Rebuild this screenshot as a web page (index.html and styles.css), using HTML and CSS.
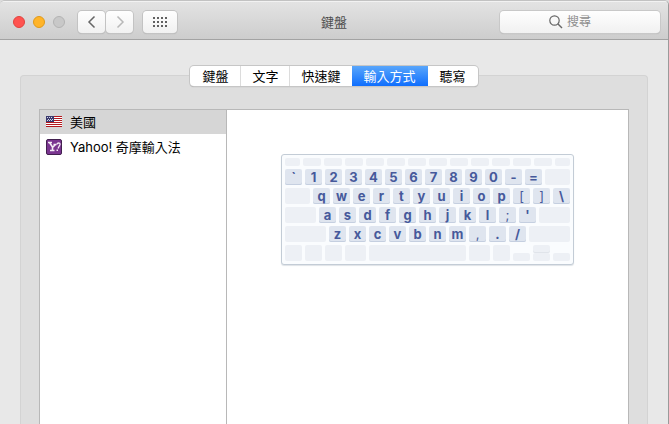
FILE: index.html
```html
<!DOCTYPE html>
<html lang="zh-Hant">
<head>
<meta charset="utf-8">
<title>鍵盤</title>
<link rel="stylesheet" href="styles.css">
</head>
<body>
<div class="window">
  <header class="titlebar">
    <div class="tools">
      <div class="lights">
        <button class="light close" aria-label="關閉"></button>
        <button class="light minimize" aria-label="縮到最小"></button>
        <button class="light disabled" aria-label="縮放" disabled></button>
      </div>
      <div class="history">
        <button class="tool" aria-label="上一頁"><svg width="10" height="14" viewBox="0 0 10 14"><path d="M7.500 1.500 2 7l5.500 5.500" fill="none" stroke="#666" stroke-width="1.500"/></svg></button>
        <button class="tool" aria-label="下一頁" disabled><svg width="10" height="14" viewBox="0 0 10 14"><path d="M2.500 1.500 8 7l-5.500 5.500" fill="none" stroke="#b8b8b8" stroke-width="1.500"/></svg></button>
      </div>
      <button class="tool all" aria-label="顯示全部"><svg width="14" height="10" viewBox="0 0 14 10"><path d="M0 1h14M0 5h14M0 9h14" fill="none" stroke="#606060" stroke-width="2" stroke-dasharray="2 2"/></svg></button>
    </div>
    <h1 class="title">鍵盤</h1>
    <label class="search">
      <svg width="14" height="14" viewBox="0 0 14 14"><circle cx="5.500" cy="5.500" r="4.700" fill="none" stroke="#666" stroke-width="1.200"/><path d="m9 9 4 4" stroke="#666" stroke-width="1.400"/></svg>
      <input type="search" placeholder="搜尋" aria-label="搜尋">
    </label>
  </header>
  <nav class="tabs">
    <button class="tab">鍵盤</button>
    <button class="tab">文字</button>
    <button class="tab">快速鍵</button>
    <button class="tab active">輸入方式</button>
    <button class="tab">聽寫</button>
  </nav>
  <main class="panel">
    <div class="split">
      <ul class="sources">
        <li class="source selected">
          <svg width="16" height="16" viewBox="0 0 16 16" shape-rendering="crispEdges"><path fill="#fff" d="M0 2h16v11H0z"/><path fill="#b3191f" d="M0 2h16v1H0zM0 4h16v1H0zM0 6h16v1H0zM0 8h16v1H0zM0 10h16v1H0zM0 12h16v1H0z"/><path fill="#3a3a6e" d="M0 2h8v6H0z"/><path fill="#d4d4e6" d="M1 3h1v1H1zM3 3h1v1H3zM5 3h1v1H5zM2 5h1v1H2zM4 5h1v1H4zM6 5h1v1H6zM1 6h1v1H1zM3 6h1v1H3zM5 6h1v1H5z"/></svg>
          <span>美國</span>
        </li>
        <li class="source">
          <svg width="16" height="16" viewBox="0 0 16 16"><rect x=".5" y=".5" width="15" height="15" rx="1.500" fill="#7a3590" stroke="#42204f"/><path d="M2 3.500h4M7.500 5.500h3M4 11.500h4.500M3.500 3.500l3 4.500v3M9.500 5.500 6.500 8.500" fill="none" stroke="#f4ecf5" stroke-width="1.600"/><path d="M11 5.500c0-2 3.500-2 3 0l-2 4" fill="none" stroke="#f4ecf5" stroke-width="1.300"/><path d="M10.500 10.500H12V12h-1.500z" fill="#f4ecf5"/></svg>
          <span>Yahoo! 奇摩輸入法</span>
        </li>
      </ul>
      <section class="preview">
        <div class="keyboard">
          <div class="row function"><i class="key edge"></i><i class="key"></i><i class="key"></i><i class="key"></i><i class="key"></i><i class="key"></i><i class="key"></i><i class="key"></i><i class="key"></i><i class="key"></i><i class="key"></i><i class="key"></i><i class="key"></i><i class="key edge"></i></div>
          <div class="row"><b class="key">`</b><b class="key">1</b><b class="key">2</b><b class="key">3</b><b class="key">4</b><b class="key">5</b><b class="key">6</b><b class="key">7</b><b class="key">8</b><b class="key">9</b><b class="key">0</b><b class="key">-</b><b class="key">=</b><i class="key fill"></i></div>
          <div class="row"><i class="key fill"></i><b class="key">q</b><b class="key">w</b><b class="key">e</b><b class="key">r</b><b class="key">t</b><b class="key">y</b><b class="key">u</b><b class="key">i</b><b class="key">o</b><b class="key">p</b><b class="key light-text">[</b><b class="key light-text">]</b><b class="key">\</b></div>
          <div class="row"><i class="key caps"></i><b class="key">a</b><b class="key">s</b><b class="key">d</b><b class="key">f</b><b class="key">g</b><b class="key">h</b><b class="key">j</b><b class="key">k</b><b class="key">l</b><b class="key light-text">;</b><b class="key">'</b><i class="key fill"></i></div>
          <div class="row"><i class="key fill"></i><b class="key">z</b><b class="key">x</b><b class="key">c</b><b class="key">v</b><b class="key">b</b><b class="key">n</b><b class="key">m</b><b class="key light-text">,</b><b class="key">.</b><b class="key">/</b><i class="key fill"></i></div>
          <div class="row"><i class="key"></i><i class="key"></i><i class="key"></i><i class="key command"></i><i class="key fill"></i><i class="key command"></i><i class="key"></i><i class="key half"></i><span class="stack"><i class="key half"></i><i class="key half"></i></span><i class="key half"></i></div>
        </div>
      </section>
    </div>
  </main>
</div>
</body>
</html>
```
FILE: styles.css
```css
* {
  box-sizing: border-box;
}

body {
  margin: 0;
  background: #dcdcdc;
  color: #000;
  font: 13px/16px Inter, "Noto Sans CJK TC", sans-serif;
}

button,
input {
  margin: 0;
  padding: 0;
  border: 0;
  color: inherit;
  font: inherit;
}

svg {
  display: block;
  flex: none;
}

.window {
  display: flex;
  flex-direction: column;
  height: 100vh;
  overflow: hidden;
  border-top: 1px solid #c2c2c2;
  border-right: 1px solid #9a9a9a;
  border-radius: 5px 5px 0 0;
  background: #e8e8e8;
}

.titlebar {
  display: grid;
  grid-template-columns: 1fr auto 1fr;
  align-items: center;
  height: 39px;
  padding: 2px 8px 0 13px;
  border-top: 1px solid #f2f2f2;
  border-bottom: 1px solid #a3a3a3;
  background: linear-gradient(#e3e3e3, #cdcdcd);
}

.tools,
.lights,
.history {
  display: flex;
  align-items: center;
}

.lights {
  gap: 8px;
  margin-right: 13px;
}

.light {
  width: 12px;
  height: 12px;
  border: 1px solid #e0443e;
  border-radius: 50%;
  background: #ff5350;
}

.minimize {
  border-color: #e09a1a;
  background: #ffb429;
}

.disabled {
  border-color: #b3b3b3;
  background: #c8c8c8;
}

.tool {
  display: grid;
  place-items: center;
  width: 27px;
  height: 22px;
  border-radius: 4px;
  background: linear-gradient(#fefefe, #f1f1f1);
  box-shadow: 0 0 0 1px #c3c3c3, 0 1px 1px #aaa;
}

.history {
  gap: 1px;
  margin-right: 10px;
}

.all {
  width: 34px;
}

.title {
  margin: 0 5px 0 0;
  color: #4d4d4d;
  font-size: 13px;
  font-weight: 400;
}

.search {
  display: flex;
  align-items: center;
  gap: 4px;
  justify-self: end;
  width: 160px;
  height: 22px;
  padding: 0 8px 0 49px;
  border-radius: 4px;
  background: linear-gradient(#fefefe, #f1f1f1);
  box-shadow: 0 0 0 1px #c8c8c8, 0 1px 1px #aaa;
}

.search input {
  flex: 1;
  min-width: 0;
  outline: 0;
  background: none;
  font-size: 12px;
  appearance: none;
}

.search input::placeholder {
  color: #8e8e8e;
  opacity: 1;
}

.tabs {
  position: relative;
  display: flex;
  align-self: center;
  height: 20px;
  margin: 26px 0 -11px;
  border-radius: 4px;
  background: #fff;
  box-shadow: 0 0 0 1px #c6c6c6, 0 1px 1px #999;
}

.tab {
  padding: 0 11px;
  border-left: 1px solid #dcdcdc;
  background: none;
}

.tab:first-child,
.active,
.active + .tab {
  padding: 0 12px;
  border-left: 0;
}

.active {
  background: linear-gradient(#59a6fb, #0f6efd);
  color: #fff;
}

.panel {
  display: flex;
  flex: 1;
  margin: 0 20px;
  padding: 33px 18px 0;
  border: 1px solid #d3d3d3;
  border-bottom: 0;
  border-radius: 4px 4px 0 0;
  background: #dedede;
}

.split {
  display: flex;
  flex: 1;
  border: 1px solid #b8b8b8;
  border-bottom: 0;
  background: #fff;
}

.sources {
  flex: 0 0 187px;
  margin: 0;
  padding: 0;
  border-right: 1px solid #b8b8b8;
  list-style: none;
}

.source {
  display: flex;
  align-items: center;
  gap: 8px;
  height: 26px;
  padding: 0 6px;
}

.selected {
  height: 24px;
  background: #d6d6d6;
}

.preview {
  flex: 1;
  padding: 44px 54px 0;
}

.keyboard {
  display: flex;
  flex-direction: column;
  gap: 3px;
  width: 293px;
  padding: 3px;
  border: 1px solid #c3ccd6;
  border-radius: 3px;
  background: #fafcfe;
  box-shadow: 0 1px 1px #dfe3e7;
}

.row {
  display: flex;
  align-items: flex-end;
  gap: 3px;
  height: 16px;
}

.key {
  flex: 0 0 17px;
  height: 16px;
  border-radius: 2px;
  background: #edf0f5;
  color: #46599b;
  font-size: 13px;
  line-height: 16px;
  text-align: center;
}

b.key {
  background: #dfe5ef;
  box-shadow: inset 0 -1px #c5cfe0;
}

.key.light-text {
  font-weight: 400;
}

.key.fill {
  flex: 1;
}

.key.caps {
  flex-basis: 31px;
}

.key.command {
  flex-basis: 21px;
}

.function {
  height: 8px;
}

.function .key {
  flex: 1;
  height: 8px;
}

.function .edge {
  flex: 0 0 15px;
}

.row .half {
  height: 8px;
}

.stack {
  display: flex;
  flex-direction: column;
  width: 17px;
}

.stack .half {
  flex: none;
}

.stack .half:first-child {
  box-shadow: inset 0 -1px #e0e4ea;
}
```
